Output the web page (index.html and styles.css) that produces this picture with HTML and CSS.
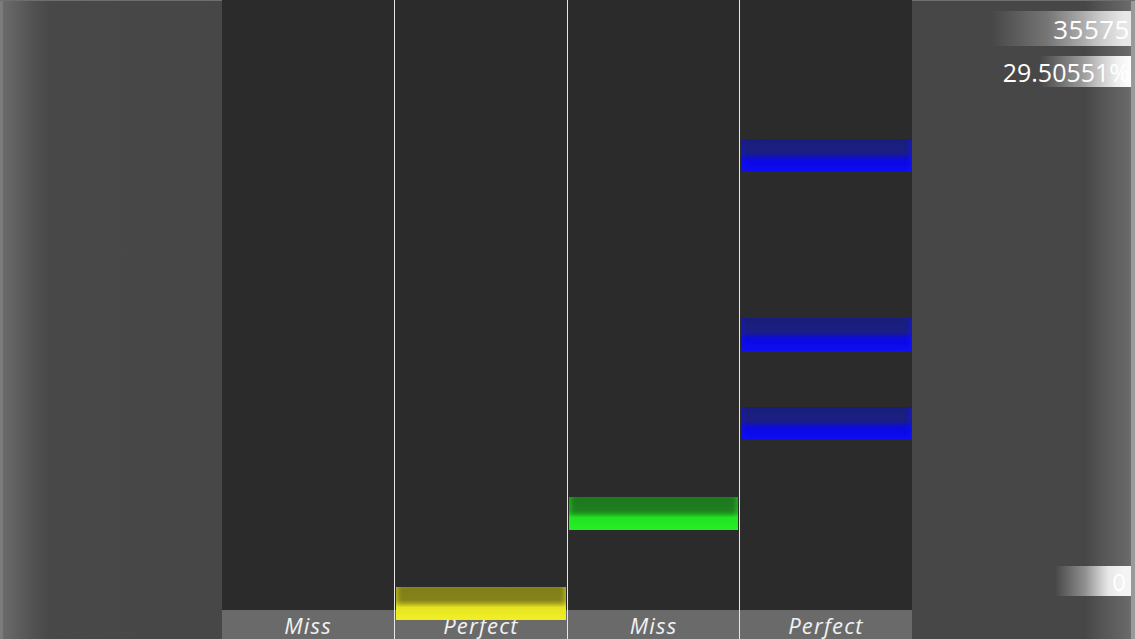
FILE: index.html
```html
<!DOCTYPE html>
<html>
<head>
<meta charset="utf-8">
<link rel="stylesheet" href="styles.css">
</head>
<body>
<div class="stage">
  <div class="side side-left"></div>
  <div class="lane">
    <div class="track"></div>
    <div class="label">Miss</div>
  </div>
  <div class="sep"></div>
  <div class="lane">
    <div class="track"></div>
    <div class="label">Perfect</div>
    <div class="note note-yellow" style="top:587px"></div>
  </div>
  <div class="sep"></div>
  <div class="lane lane-narrow">
    <div class="track"></div>
    <div class="label">Miss</div>
    <div class="note note-green" style="top:497px"></div>
  </div>
  <div class="sep"></div>
  <div class="lane">
    <div class="track"></div>
    <div class="label">Perfect</div>
    <div class="note note-blue" style="top:139px"></div>
    <div class="note note-blue" style="top:318px"></div>
    <div class="note note-blue" style="top:407px"></div>
  </div>
  <div class="side side-right">
    <div class="score score-main"><span>35575</span></div>
    <div class="score score-acc"><span>29.50551%</span></div>
    <div class="spacer"></div>
    <div class="score score-combo"><span>0</span></div>
  </div>
</div>
</body>
</html>
```
FILE: styles.css
```css
html, body {
  margin: 0;
  padding: 0;
  background: #474747;
  overflow: hidden;
}
.stage {
  width: 1135px;
  height: 639px;
  display: flex;
  flex-direction: row;
  font-family: "Open Sans", "DejaVu Sans", sans-serif;
}
.side {
  height: 639px;
  box-sizing: border-box;
  border-top: 1px solid #6e6e6e;
}
.side-left {
  width: 222px;
  background:
    linear-gradient(to right, #7c7c7c 0, #7c7c7c 3px, #6a6a6a 3px, #5e5e5e 18px, #515151 34px, #484848 50px, #474747 100%);
}
.side-right {
  flex: 1;
  display: flex;
  flex-direction: column;
  align-items: flex-end;
  padding-right: 4px;
  background:
    linear-gradient(to right, #474747 0, #474747 173px, #555 190px, #656565 212px, #6c6c6c 219px, #9a9a9a 219px, #9a9a9a 100%);
}
.lane {
  width: 172px;
  height: 639px;
  position: relative;
  display: flex;
  flex-direction: column;
}
.lane-narrow {
  width: 171px;
}
.sep {
  width: 1px;
  height: 639px;
  background: #e6e6e6;
}
.track {
  flex: 1;
  background: #2b2b2b;
}
.label {
  height: 29px;
  background: #6a6a6a;
  color: #f2f2f2;
  font-style: italic;
  font-size: 22px;
  line-height: 30px;
  text-align: center;
  letter-spacing: 1.2px;
}
.note {
  position: absolute;
  left: 1px;
  right: 1px;
  height: 33px;
  z-index: 2;
}
.note-yellow {
  background: linear-gradient(to bottom, #7e7d18 0, #85841a 40%, #a9a71c 50%, #e6e422 62%, #f3f124 100%);
  box-shadow: inset 4px -6px 5px -2px rgba(240,238,40,0.5), inset -4px 0 5px -2px rgba(240,238,40,0.5);
}
.note-green {
  background: linear-gradient(to bottom, #1c761c 0, #1f7f1f 40%, #1e9e1e 50%, #22e222 62%, #26f026 100%);
  box-shadow: inset 4px -6px 5px -2px rgba(40,240,40,0.5), inset -4px 0 5px -2px rgba(40,240,40,0.5);
}
.note-blue {
  background: linear-gradient(to bottom, #1a1e78 0, #1b1f82 40%, #16189e 50%, #0c0ae2 62%, #0c0af0 100%);
  box-shadow: inset 4px -6px 5px -2px rgba(20,20,245,0.55), inset -4px 0 5px -2px rgba(20,20,245,0.55);
}
.score {
  display: flex;
  justify-content: flex-end;
  align-items: center;
  color: #ffffff;
  white-space: nowrap;
}
.score-main {
  margin-top: 10px;
  width: 140px;
  height: 35px;
  font-size: 26px;
  letter-spacing: 0.5px;
  background: linear-gradient(to right, rgba(255,255,255,0) 0, rgba(255,255,255,0.25) 40%, rgba(255,255,255,0.65) 75%, rgba(238,238,238,0.95) 95%);
}
.score-main span {
  margin-right: 1px;
}
.score-acc {
  margin-top: 10px;
  width: 140px;
  height: 31px;
  font-size: 25px;
  background: linear-gradient(to right, rgba(255,255,255,0) 0, rgba(255,255,255,0) 35%, rgba(255,255,255,0.45) 65%, rgba(255,255,255,0.9) 90%, #ffffff 100%);
}
.score-acc span {
  margin-right: 1px;
}
.spacer {
  flex: 1;
}
.score-combo {
  width: 76px;
  height: 30px;
  font-size: 24px;
  margin-bottom: 43px;
  background: linear-gradient(to right, rgba(255,255,255,0) 0, rgba(255,255,255,0.4) 40%, rgba(255,255,255,0.85) 70%, #f4f4f4 90%);
}
.score-combo span {
  margin-right: 5px;
}
```
